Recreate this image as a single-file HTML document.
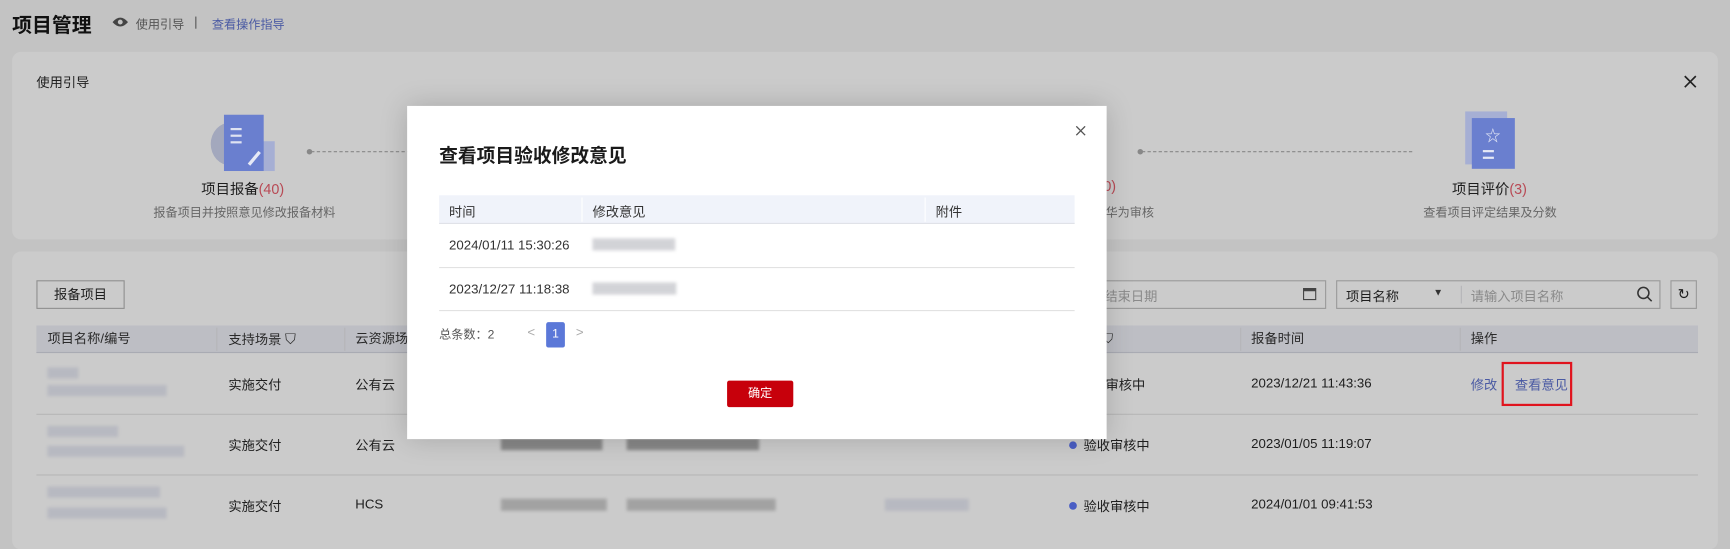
<!DOCTYPE html>
<html><head><meta charset="utf-8"><style>
*{margin:0;padding:0;box-sizing:border-box}
html,body{width:1730px;height:535px;overflow:hidden;background:#c3c3c3}
body{font-family:"Liberation Sans","Noto Sans CJK SC",sans-serif;font-size:12px;color:#1e1e1e}
#w{position:absolute;left:0;top:0;width:1568px;height:485px;transform:scale(1.10332);transform-origin:0 0}
.a{position:absolute;white-space:nowrap}
.card{position:absolute;background:#cbcbcb;border-radius:8px}
.blur{position:absolute;background:#b3b5bf;filter:blur(1.5px);opacity:.8}
.blue{color:#4a5aa3}
.dot{display:inline-block;width:7px;height:7px;border-radius:50%;background:#4a5ec4;margin-right:6px;vertical-align:1px}
.th{position:absolute;top:295px;height:25px;line-height:25px;color:#2a2a2a}
.sep{position:absolute;width:1px;background:#b5b5b8}
.line{position:absolute;height:1px;background:#b6b6b6}
</style></head><body><div id="w">
<div class="a" style="left:11px;top:9px;font-size:18px;font-weight:bold;color:#111">项目管理</div>
<svg class="a" style="left:102px;top:15px" width="14" height="10" viewBox="0 0 14 10"><path d="M0 5Q7-3 14 5Q7 13 0 5Z" fill="#444"/><circle cx="7" cy="5" r="2.2" fill="#c3c3c3"/></svg>
<div class="a" style="left:123px;top:14px;font-size:11px;color:#555">使用引导</div>
<div class="a" style="left:177px;top:15px;width:1px;height:11px;background:#555"></div>
<div class="a blue" style="left:192px;top:14px;font-size:11px">查看操作指导</div>

<div class="card" style="left:11px;top:47px;width:1546px;height:170px"></div>
<div class="a" style="left:33px;top:66px;font-size:12px">使用引导</div>
<svg class="a" style="left:1526px;top:68px" width="12" height="12"><path d="M1 1L11 11M11 1L1 11" stroke="#222" stroke-width="1.5"/></svg>
<!-- step1 icon -->
<div class="a" style="left:191px;top:111px;width:36px;height:39px;border-radius:50%;background:#a3a8bd"></div>
<div class="a" style="left:230px;top:128px;width:19px;height:27px;background:#a6afd4"></div>
<div class="a" style="left:203px;top:104px;width:36px;height:51px;background:#6a7fcf"></div>
<div class="a" style="left:209px;top:116px;width:10px;height:2px;background:#dfe3f2;box-shadow:0 6px 0 #dfe3f2,0 12px 0 #dfe3f2"></div>
<div class="a" style="left:229px;top:136px;width:3px;height:15px;background:#e6e9f6;transform:rotate(40deg)"></div>
<div class="a" style="left:170px;top:161px;width:100px;text-align:center;font-size:13px">项目报备<span style="color:#b84a55">(40)</span></div>
<div class="a" style="left:139px;top:184px;font-size:11px;color:#666">报备项目并按照意见修改报备材料</div>
<div class="a" style="left:278px;top:135px;width:5px;height:5px;border-radius:50%;background:#888"></div>
<div class="a" style="left:282px;top:137px;width:90px;border-top:1px dashed #888"></div>
<div class="a" style="left:1031px;top:135px;width:5px;height:5px;border-radius:50%;background:#888"></div>
<div class="a" style="left:1035px;top:137px;width:245px;border-top:1px dashed #888"></div>
<div class="a" style="left:1000px;top:161px;font-size:13px;color:#b84a55">0)</div>
<div class="a" style="left:1002px;top:184px;font-size:11px;color:#666">华为审核</div>
<!-- step right icon -->
<div class="a" style="left:1328px;top:101px;width:38px;height:48px;background:#a6afd4"></div>
<div class="a" style="left:1334px;top:107px;width:39px;height:46px;background:#6a7fcf"></div>
<div class="a" style="left:1346px;top:113px;color:#e6e9f6;font-size:14px">☆</div>
<div class="a" style="left:1344px;top:136px;width:10px;height:2px;background:#e6e9f6;box-shadow:0 6px 0 #e6e9f6"></div>
<div class="a" style="left:1300px;top:161px;width:100px;text-align:center;font-size:13px">项目评价<span style="color:#b84a55">(3)</span></div>
<div class="a" style="left:1290px;top:184px;font-size:11px;color:#666">查看项目评定结果及分数</div>

<div class="card" style="left:11px;top:228px;width:1546px;height:270px"></div>
<div class="a" style="left:33px;top:254px;width:80px;height:26px;border:1px solid #8f8f8f;text-align:center;line-height:24px">报备项目</div>
<div class="a" style="left:960px;top:254px;width:242px;height:26px;border:1px solid #999"></div>
<div class="a" style="left:1001px;top:260px;color:#8a8a8a">结束日期</div>
<div class="a" style="left:1181px;top:261px;width:12px;height:11px;border:1.5px solid #444;border-top-width:3px"></div>
<div class="a" style="left:1211px;top:254px;width:294px;height:26px;border:1px solid #999"></div>
<div class="a" style="left:1220px;top:260px">项目名称</div>
<div class="a" style="left:1299px;top:260px;font-size:9px;color:#333">▼</div>
<div class="sep" style="left:1324px;top:259px;height:16px"></div>
<div class="a" style="left:1333px;top:260px;color:#8a8a8a">请输入项目名称</div>
<svg class="a" style="left:1483px;top:259px" width="15" height="15"><circle cx="6.5" cy="6.5" r="5" fill="none" stroke="#333" stroke-width="1.4"/><path d="M10 10l4 4" stroke="#333" stroke-width="1.4"/></svg>
<div class="a" style="left:1514px;top:254px;width:24px;height:26px;border:1px solid #999;text-align:center;line-height:24px;font-size:13px">↻</div>

<div class="a" style="left:33px;top:295px;width:1506px;height:25px;background:#bdbec4;border-bottom:1px solid #a9abb3"></div>
<div class="th" style="left:43px">项目名称/编号</div>
<div class="th" style="left:207px">支持场景 <span style="font-size:13px">⛉</span></div>
<div class="th" style="left:322px">云资源场景</div>
<div class="th" style="left:1000px">⛉</div>
<div class="th" style="left:1134px">报备时间</div>
<div class="th" style="left:1333px">操作</div>
<div class="sep" style="left:196px;top:297px;height:21px"></div>
<div class="sep" style="left:312px;top:297px;height:21px"></div>
<div class="sep" style="left:1124px;top:297px;height:21px"></div>
<div class="sep" style="left:1323px;top:297px;height:21px"></div>

<div class="line" style="left:33px;top:375px;width:1506px"></div>
<div class="line" style="left:33px;top:430px;width:1506px"></div>
<div class="blur" style="left:43px;top:333px;width:28px;height:10px"></div>
<div class="blur" style="left:43px;top:349px;width:108px;height:10px"></div>
<div class="blur" style="left:43px;top:386px;width:64px;height:10px"></div>
<div class="blur" style="left:43px;top:404px;width:124px;height:10px"></div>
<div class="blur" style="left:43px;top:441px;width:102px;height:10px"></div>
<div class="blur" style="left:43px;top:460px;width:108px;height:10px"></div>
<div class="blur" style="left:454px;top:397px;width:92px;height:11px;background:#777"></div>
<div class="blur" style="left:568px;top:397px;width:120px;height:11px;background:#777"></div>
<div class="blur" style="left:454px;top:452px;width:96px;height:11px;background:#999"></div>
<div class="blur" style="left:568px;top:452px;width:135px;height:11px;background:#999"></div>
<div class="blur" style="left:802px;top:452px;width:76px;height:11px"></div>

<div class="a" style="left:207px;top:340px">实施交付</div>
<div class="a" style="left:322px;top:340px">公有云</div>
<div class="a" style="left:990px;top:340px">收审核中</div>
<div class="a" style="left:1134px;top:340px">2023/12/21 11:43:36</div>
<div class="a blue" style="left:1333px;top:340px">修改</div>
<div class="sep" style="left:1361px;top:341px;height:14px"></div>
<div class="a blue" style="left:1373px;top:340px">查看意见</div>
<div class="a" style="left:1361px;top:328px;width:64px;height:40px;border:2px solid #e0141e"></div>

<div class="a" style="left:207px;top:395px">实施交付</div>
<div class="a" style="left:322px;top:395px">公有云</div>
<div class="a" style="left:969px;top:395px"><span class="dot"></span>验收审核中</div>
<div class="a" style="left:1134px;top:395px">2023/01/05 11:19:07</div>
<div class="a" style="left:207px;top:450px">实施交付</div>
<div class="a" style="left:322px;top:450px">HCS</div>
<div class="a" style="left:969px;top:450px"><span class="dot"></span>验收审核中</div>
<div class="a" style="left:1134px;top:450px">2024/01/01 09:41:53</div>

<!-- modal -->
<div class="a" style="left:369px;top:96px;width:634px;height:302px;background:#fff;box-shadow:0 0 24px rgba(0,0,0,.18)"></div>
<svg class="a" style="left:975px;top:114px" width="9" height="9"><path d="M.5 .5L8.5 8.5M8.5 .5L.5 8.5" stroke="#555" stroke-width="1.2"/></svg>
<div class="a" style="left:398px;top:127px;font-size:17px;font-weight:bold;color:#1a1a1a">查看项目验收修改意见</div>
<div class="a" style="left:398px;top:177px;width:576px;height:26px;background:#f0f3fa;border-bottom:1px solid #dfe1e8"></div>
<div class="a" style="left:407px;top:183px;color:#333">时间</div>
<div class="a" style="left:537px;top:183px;color:#333">修改意见</div>
<div class="a" style="left:848px;top:183px;color:#333">附件</div>
<div class="a" style="left:527px;top:179px;width:1px;height:22px;background:#fff"></div>
<div class="a" style="left:838px;top:179px;width:1px;height:22px;background:#fff"></div>
<div class="a" style="left:407px;top:215px;color:#333">2024/01/11 15:30:26</div>
<div class="a" style="left:407px;top:255px;color:#333">2023/12/27 11:18:38</div>
<div class="blur" style="left:537px;top:216px;width:75px;height:11px;background:#c8c9ce"></div>
<div class="blur" style="left:537px;top:256px;width:76px;height:11px;background:#c8c9ce"></div>
<div class="a" style="left:398px;top:242px;width:576px;height:1px;background:#e2e2e2"></div>
<div class="a" style="left:398px;top:281px;width:576px;height:1px;background:#e2e2e2"></div>
<div class="a" style="left:398px;top:295px;font-size:11px;color:#555">总条数：2</div>
<div class="a" style="left:478px;top:294px;color:#aaa">&lt;</div>
<div class="a" style="left:495px;top:292px;width:17px;height:23px;background:#5b78d8;color:#fff;text-align:center;line-height:23px;border-radius:2px;font-size:11px">1</div>
<div class="a" style="left:522px;top:294px;color:#aaa">&gt;</div>
<div class="a" style="left:659px;top:345px;width:60px;height:24px;background:#c7000b;color:#fff;text-align:center;line-height:24px;font-size:11px;border-radius:2px">确定</div>
</div></body></html>
